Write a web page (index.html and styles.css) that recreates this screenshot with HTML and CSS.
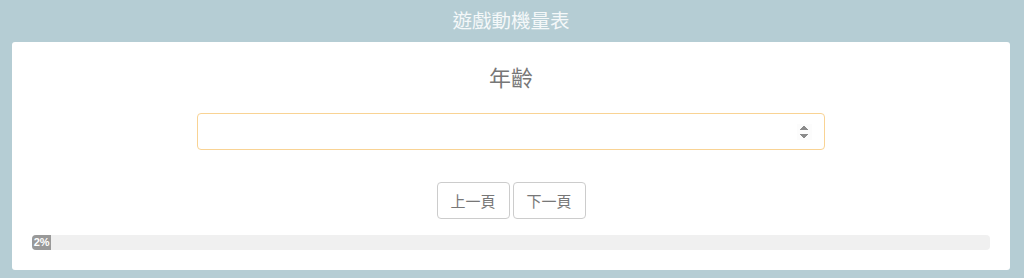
FILE: index.html
```html
<!DOCTYPE html>
<html>
<head>
  <meta charset="utf-8">
  <title>遊戲動機量表</title>
  <link rel="stylesheet" href="styles.css">
</head>
<body>
  <h1 class="page-title">遊戲動機量表</h1>

  <div class="card">
    <h2 class="question">年齡</h2>

    <div class="field">
      <input type="number" class="answer" id="age" autofocus>
    </div>

    <div class="nav">
      <button class="nav-btn">上一頁</button>
      <button class="nav-btn">下一頁</button>
    </div>

    <div class="progress">
      <div class="progress-fill" style="width: 2%">2%</div>
    </div>
  </div>
</body>
</html>
```

FILE: styles.css
```css
/* Global styles */
body {
  background-color: #b5cdd4;
  margin: 0;
  padding: 0 14px 8px 12px;
  font-family: "Liberation Sans", "Noto Sans CJK TC", sans-serif;
  color: #666;
}

.page-title {
  margin: 0;
  height: 42px;
  line-height: 42px;
  font-size: 19.5px;
  font-weight: normal;
  color: #f4f8f9;
  text-align: center;
}

.card {
  background-color: #fff;
  border-radius: 3px;
  padding: 22px 20px 20px;
  height: 186px;
  box-sizing: content-box;
}

.question {
  margin: 0;
  font-size: 22px;
  font-weight: normal;
  line-height: 30px;
  text-align: center;
  color: #777;
}

.field {
  display: flex;
  justify-content: center;
  margin-top: 19px;
}

.answer {
  width: 628px;
  height: 37px;
  box-sizing: border-box;
  border: 1px solid #f9d394;
  border-radius: 4px;
  padding: 6px 12px;
  font-size: 14px;
  outline: none;
}

.nav {
  display: flex;
  justify-content: center;
  gap: 3px;
  margin-top: 32px;
}

.nav-btn {
  width: 73px;
  height: 37px;
  background-color: #fff;
  border: 1px solid #ccc;
  border-radius: 4px;
  font-family: "Liberation Sans", "Noto Sans CJK TC", sans-serif;
  font-size: 15px;
  color: #777;
  padding: 0;
}

.progress {
  margin-top: 16px;
  height: 15px;
  background-color: #f0f0f0;
  border-radius: 4px;
  overflow: hidden;
}

.progress-fill {
  height: 100%;
  min-width: 19px;
  background-color: #999;
  color: #fff;
  font-size: 11px;
  font-weight: bold;
  line-height: 15px;
  text-align: center;
}
```
